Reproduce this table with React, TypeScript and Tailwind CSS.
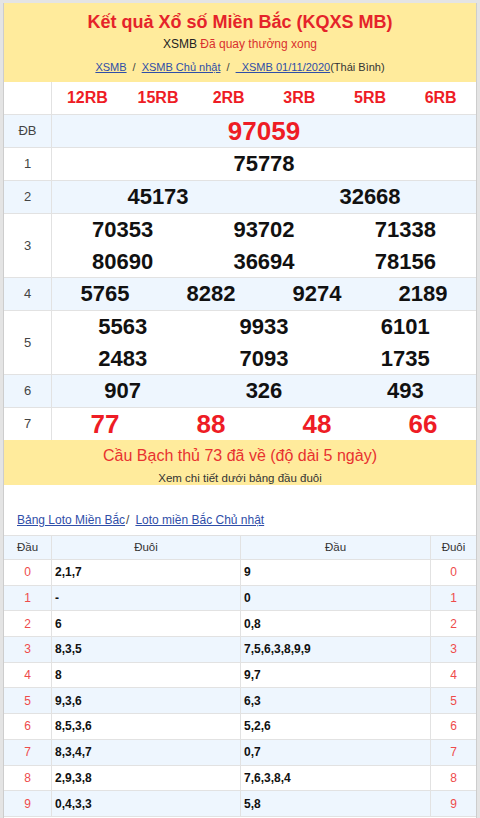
import { Fragment } from 'react'

const font = '[font-family:Liberation_Sans,Arial,sans-serif]'

interface PrizeRow {
  label: string
  cols: 'grid-cols-1' | 'grid-cols-2' | 'grid-cols-3' | 'grid-cols-4'
  numbers: string[]
  red?: boolean
}

const prizeNames = ['12RB', '15RB', '2RB', '3RB', '5RB', '6RB']

const prizes: PrizeRow[] = [
  { label: 'ĐB', cols: 'grid-cols-1', numbers: ['97059'], red: true },
  { label: '1', cols: 'grid-cols-1', numbers: ['75778'] },
  { label: '2', cols: 'grid-cols-2', numbers: ['45173', '32668'] },
  { label: '3', cols: 'grid-cols-3', numbers: ['70353', '93702', '71338', '80690', '36694', '78156'] },
  { label: '4', cols: 'grid-cols-4', numbers: ['5765', '8282', '9274', '2189'] },
  { label: '5', cols: 'grid-cols-3', numbers: ['5563', '9933', '6101', '2483', '7093', '1735'] },
  { label: '6', cols: 'grid-cols-3', numbers: ['907', '326', '493'] },
  { label: '7', cols: 'grid-cols-4', numbers: ['77', '88', '48', '66'], red: true },
]

const loto = [
  { d: '0', tail: '2,1,7', head: '9' },
  { d: '1', tail: '-', head: '0' },
  { d: '2', tail: '6', head: '0,8' },
  { d: '3', tail: '8,3,5', head: '7,5,6,3,8,9,9' },
  { d: '4', tail: '8', head: '9,7' },
  { d: '5', tail: '9,3,6', head: '6,3' },
  { d: '6', tail: '8,5,3,6', head: '5,2,6' },
  { d: '7', tail: '8,3,4,7', head: '0,7' },
  { d: '8', tail: '2,9,3,8', head: '7,6,3,8,4' },
  { d: '9', tail: '0,4,3,3', head: '5,8' },
]

function ResultTable() {
  return (
    <div>
      <div className="flex h-[33px] border-b border-[#e2e2e2]">
        <div className="w-[48px] shrink-0 border-r border-[#e2e2e2]" />
        <div className="grid flex-1 grid-cols-6 items-center text-center text-[16px] font-bold text-[#ee1c25]">
          {prizeNames.map((name) => (
            <span key={name}>{name}</span>
          ))}
        </div>
      </div>
      {prizes.map((row, index) => {
        const multi = row.numbers.length > 4
        return (
          <div
            key={row.label}
            className={`flex border-b border-[#e2e2e2] ${index % 2 === 0 ? 'bg-[#eef6fe]' : 'bg-white'}`}
          >
            <div className="flex w-[48px] shrink-0 items-center justify-center border-r border-[#e2e2e2] text-[13px] text-[#444]">
              {row.label}
            </div>
            <div
              className={`grid flex-1 ${row.cols} text-center font-bold ${
                row.red ? 'text-[26px] text-[#ee1c25]' : 'text-[22px] text-[#111]'
              } ${multi ? 'leading-[31.5px]' : 'leading-[32px]'}`}
            >
              {row.numbers.map((num, i) => (
                <span key={`${num}-${i}`}>{num}</span>
              ))}
            </div>
          </div>
        )
      })}
    </div>
  )
}

function LotoTable() {
  const cell = 'border-r border-b border-[#e2e2e2]'
  return (
    <div className="grid grid-cols-[48px_189px_190px_1fr] border-t border-[#e2e2e2] text-[12px]">
      {['Đầu', 'Đuôi', 'Đầu', 'Đuôi'].map((title, i) => (
        <div
          key={`${title}-${i}`}
          className={`flex h-[24px] items-center justify-center bg-[#eef6fe] text-[11.5px] text-[#333] ${i < 3 ? cell : 'border-b border-[#e2e2e2]'}`}
        >
          {title}
        </div>
      ))}
      {loto.map((row, index) => {
        const bg = index % 2 === 1 ? 'bg-[#eef6fe]' : 'bg-white'
        return (
          <Fragment key={row.d}>
            <div className={`flex h-[25.7px] items-center justify-center text-[#ee4b4b] ${bg} ${cell}`}>{row.d}</div>
            <div className={`flex items-center pl-[3px] font-bold text-[#111] ${bg} ${cell}`}>{row.tail}</div>
            <div className={`flex items-center pl-[3px] font-bold text-[#111] ${bg} ${cell}`}>{row.head}</div>
            <div className={`flex items-center justify-center border-b border-[#e2e2e2] text-[#ee4b4b] ${bg}`}>{row.d}</div>
          </Fragment>
        )
      })}
    </div>
  )
}

export default function App() {
  return (
    <div className={`${font} h-[818px] w-[480px] overflow-hidden bg-[#e4e4e4] px-[3px] pt-[3px]`}>
      <div className="min-h-full border-x border-[#cdcdcd] bg-white">
        <div className="bg-[#ffeb9c] pt-[8px] pb-[7px] text-center">
          <h1 className="text-[18px] font-bold leading-[22px] text-[#e5232a]">Kết quả Xổ số Miền Bắc (KQXS MB)</h1>
          <p className="mt-[3px] text-[12px] leading-[16px] text-[#222]">
            XSMB <span className="text-[#d9302e]">Đã quay thưởng xong</span>
          </p>
          <p className="mt-[7px] text-[11px] leading-[16px] text-[#444]">
            <a className="text-[#2f4ea8] underline">XSMB</a>
            <span className="mx-[6px]">/</span>
            <a className="text-[#2f4ea8] underline">XSMB Chủ nhật</a>
            <span className="mx-[6px]">/</span>
            <a className="text-[#2f4ea8] underline">&nbsp; XSMB 01/11/2020</a>
            <span className="text-[#333]">(Thái Bình)</span>
          </p>
        </div>

        <ResultTable />

        <div className="-mt-px bg-[#ffeb9c] pt-[6px] text-center">
          <p className="text-[16px] leading-[20px] text-[#e8322f]">Cầu Bạch thủ 73 đã về (độ dài 5 ngày)</p>
          <p className="mt-[5px] text-[11.5px] leading-[14px] text-[#333]">Xem chi tiết dưới bảng đầu đuôi</p>
        </div>

        <div className="pt-[28px] pb-[8px] pl-[13px] text-[12px] leading-[14px] text-[#444]">
          <a className="text-[#2f4ea8] underline">Bảng Loto Miền Bắc</a>
          <span className="ml-[1px] mr-[6px]">/</span>
          <a className="text-[#2f4ea8] underline">Loto miền Bắc Chủ nhật</a>
        </div>

        <LotoTable />
      </div>
    </div>
  )
}
